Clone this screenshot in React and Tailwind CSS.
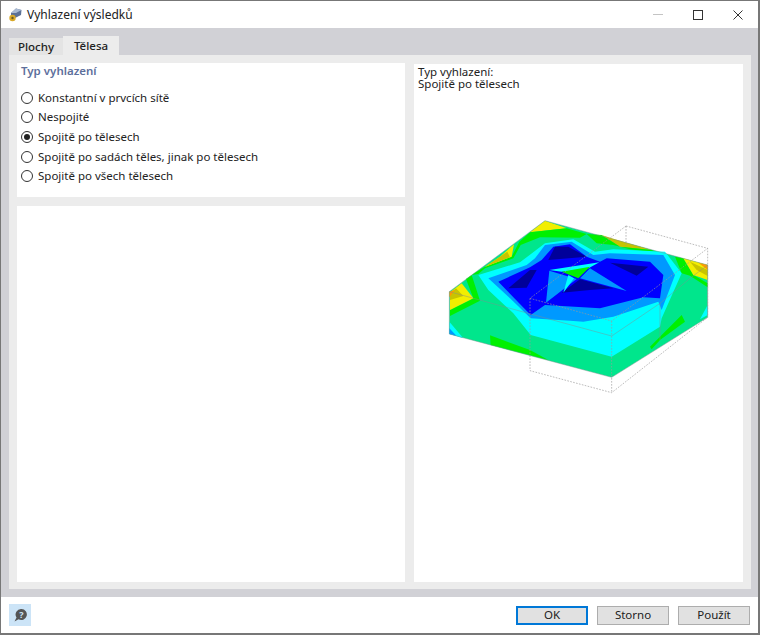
import React from 'react';

const options = [
    'Konstantní v prvcích sítě',
    'Nespojité',
    'Spojitě po tělesech',
    'Spojitě po sadách těles, jinak po tělesech',
    'Spojitě po všech tělesech',
];

// barevne plochy modelu, kresleno odzadu dopredu
const shapes = [
    ['#00e68c', '345,32 833,165 833,322 545,502 58,372 58,245'],
    ['#f2ee00', '345,32 410,55 300,67'],
    ['#00f000', '135,188 165,170 245,140 268,95 300,67 410,55 470,72 450,83 330,82 272,105 250,145 165,175 145,192 125,195'],
    ['#f2ee00', '252,103 245,140 165,170 210,140'],
    ['#c8c400', '210,140 232,125 240,142 165,170'],
    ['#c8c400', '515,75 545,85 665,120 570,110'],
    ['#00f000', '470,72 515,75 570,110 665,120 690,130 600,118 550,105 500,100'],
    ['#00f000', '108,207 125,195 150,272 60,318 60,300 130,265'],
    ['#f2ee00', '60,247 95,220 130,265 60,300'],
    ['#c8c400', '60,250 78,235 100,258 60,270'],
    ['#ff9a00', '58,245 75,240 58,262'],
    ['#00f000', '735,140 760,145 790,195 833,220 833,232 780,197 755,190'],
    ['#f2ee00', '760,145 833,165 833,210 790,195'],
    ['#c8c400', '780,155 833,180 833,198 800,180'],
    ['#ff9a00', '805,158 833,165 833,180'],
    ['#00ffff', '145,195 270,157 345,100 430,88 495,125 550,118 705,125 755,190 695,325 690,350 545,440 302,375 250,310 175,240'],
    ['#00ffff', '58,335 100,385 58,372'],
    ['#0099ff', '58,355 80,378 58,372'],
    ['#00ffff', '833,285 833,315 810,328'],
    ['#0099ff', '175,205 290,165 315,145 345,105 425,95 490,135 540,130 700,135 735,195 695,300 685,275 550,320 460,335 420,332 302,325 240,265'],
    ['#0000ff', '205,215 300,172 335,150 370,110 420,103 470,140 510,155 530,145 660,155 700,195 690,265 640,262 510,295 345,285 302,315'],
    ['#00009a', '235,235 300,180 320,180 290,233'],
    ['#00009a', '355,150 375,110 415,110 470,140'],
    ['#00009a', '540,158 655,170 620,197'],
    ['#00009a', '395,248 450,208 550,235 480,240'],
    ['#0099ff', '348,278 358,182 440,207'],
    ['#00ffff', '415,195 432,205 400,248'],
    ['#0099ff', '480,175 590,243 450,205'],
    ['#00ffff', '358,180 508,157 470,178 395,185'],
    ['#00f000', '395,185 480,170 445,205'],
    ['#00f000', '180,376 300,420 355,450 182,405'],
    ['#00f000', '660,410 755,315 765,335 690,390 665,418'],
];

const Model = () => (
    <svg className="ml-3 mt-[120px] shrink-0" width="290" height="190" viewBox="0 0 870 570">
        {shapes.map(([fill, points], i) => <polygon key={i} fill={fill} points={points} />)}
        <path d="M58 245 L345 32 L833 165 M58 245 L120 262 L302 312 L545 378 L690 280 L780 205 L833 165 M58 372 L545 502 L833 322 M58 245V372 M833 165V322 M690 280V390" fill="none" stroke="#7f8f8f" strokeOpacity="0.55" strokeWidth="2.5" />
        <path d="M588 48 L833 115 L833 322 M588 48 L300 265 L545 333 L833 115 M588 48V105 M300 265V482 L545 548 L833 322 M545 333V548" fill="none" stroke="#9a9a9a" strokeOpacity="0.8" strokeWidth="2.5" strokeDasharray="5 4" />
    </svg>
);

const Radio = ({ label, checked }) => (
    <label className="flex items-center h-[19.6px] gap-[5px]">
        <span className="w-[12px] h-[12px] rounded-full border border-[#333] bg-white flex items-center justify-center shrink-0">
            {checked && <span className="w-[6px] h-[6px] rounded-full bg-[#222]"></span>}
        </span>
        <span className="text-[#222]">{label}</span>
    </label>
);

const App = () => {
    return (
        <div className="w-[760px] h-[635px] flex flex-col bg-white border-t border-l border-[#777] border-r-2 border-b-2 text-[11.5px] leading-[12px] text-[#222] font-['Noto_Sans','Liberation_Sans',sans-serif]">
            <div className="h-[27px] flex items-center shrink-0">
                <svg className="ml-[7px]" width="15" height="15" viewBox="0 0 15 15">
                    <path d="M3 6 L8 1.5 L13.5 3 L13 8 L7 11 L3 9Z" fill="#5c7196" />
                    <path d="M8 1.5 L13.5 3 L8 6 L3 6Z" fill="#a9bad2" />
                    <circle cx="4.5" cy="11" r="3.2" fill="#d9a928" />
                    <circle cx="4.5" cy="11" r="1.2" fill="#6b5a20" />
                </svg>
                <span className="ml-[4px] text-[12px]">Vyhlazení výsledků</span>
                <div className="ml-auto flex">
                    <div className="w-10 h-[27px] flex items-center justify-center">
                        <div className="w-[10px] h-px bg-[#c4c4c4]"></div>
                    </div>
                    <div className="w-10 h-[27px] flex items-center justify-center">
                        <div className="w-[10px] h-[10px] border border-[#333]"></div>
                    </div>
                    <div className="w-10 h-[27px] flex items-center justify-center">
                        <svg width="10" height="10" viewBox="0 0 10 10"><path d="M0.5 0.5 L9.5 9.5 M9.5 0.5 L0.5 9.5" stroke="#333" strokeWidth="1" /></svg>
                    </div>
                </div>
            </div>

            <div className="flex-1 min-h-0 flex flex-col bg-[#d1d1d6] pl-2 pr-[7px] pb-2">
                <div className="h-[27px] flex items-end shrink-0">
                    <div className="w-[54px] h-[17px] bg-[#e4e4e4] flex items-center justify-center font-medium">Plochy</div>
                    <div className="w-[56px] h-[19px] bg-[#ececec] flex items-center justify-center font-medium">Tělesa</div>
                </div>
                <div className="flex-1 min-h-0 flex gap-[9px] bg-[#ececec] p-2 pb-[7px]">
                    <div className="w-[388px] flex flex-col gap-[9px]">
                        <div className="h-[134px] bg-white pl-1 pt-[2px]">
                            <div className="font-semibold text-[#5d6f9c] h-[14px]">Typ vyhlazení</div>
                            <div className="mt-[9px] flex flex-col">
                                {options.map((o, i) => <Radio key={o} label={o} checked={i === 2} />)}
                            </div>
                        </div>
                        <div className="flex-1 bg-white"></div>
                    </div>
                    <div className="flex-1 mt-px bg-white flex flex-col pl-1 pt-[2px]">
                        <div>Typ vyhlazení:</div>
                        <div>Spojitě po tělesech</div>
                        <Model />
                    </div>
                </div>
            </div>

            <div className="h-[36px] flex items-center shrink-0 pl-2 pr-2">
                <div className="w-[22px] h-[22px] bg-[#cce4f7] flex items-center justify-center">
                    <svg width="15" height="15" viewBox="0 0 15 15">
                        <path d="M8.5 1 A5.5 5.5 0 1 1 5.5 11.2 L1.5 13.5 L3.5 9.5 A5.5 5.5 0 0 1 8.5 1Z" fill="#555" />
                        <text x="8.5" y="10" fontSize="9" fontWeight="700" textAnchor="middle" fill="#cce4f7">?</text>
                    </svg>
                </div>
                <div className="ml-auto flex gap-[9px]">
                    <button className="w-[72px] h-[19px] bg-[#e1e1e1] border-2 border-[#0078d7] flex items-center justify-center">OK</button>
                    <button className="w-[72px] h-[19px] bg-[#e1e1e1] border border-[#adadad] flex items-center justify-center">Storno</button>
                    <button className="w-[72px] h-[19px] bg-[#e1e1e1] border border-[#adadad] flex items-center justify-center">Použít</button>
                </div>
            </div>
        </div>
    );
};

export default App;
